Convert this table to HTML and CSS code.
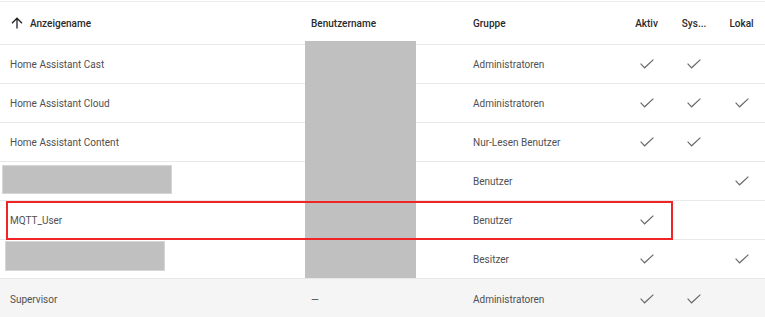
FILE: index.html
```html
<!DOCTYPE html>
<html lang="de">
<head>
<meta charset="utf-8">
<link rel="stylesheet" href="styles.css">
</head>
<body>
<div class="table">
  <div class="row head">
    <div class="cell name"><svg class="arrow" viewBox="0 0 12 12" width="12" height="12"><path d="M6 1.2V11.5M1 6.2L6 1.2L11 6.2" fill="none" stroke="#222" stroke-width="1.3"/></svg>Anzeigename</div>
    <div class="cell user">Benutzername</div>
    <div class="cell group">Gruppe</div>
    <div class="cell flag">Aktiv</div>
    <div class="cell flag">Sys...</div>
    <div class="cell flag">Lokal</div>
  </div>
  <div class="row">
    <div class="cell name">Home Assistant Cast</div>
    <div class="cell user"></div>
    <div class="cell group">Administratoren</div>
    <div class="cell flag"><svg class="check" viewBox="0 0 14 10" width="14" height="10"><path d="M0.6 4.6L4.6 8.8L13.4 0.6" fill="none" stroke="#6a6a6a" stroke-width="1.2"/></svg></div>
    <div class="cell flag"><svg class="check" viewBox="0 0 14 10" width="14" height="10"><path d="M0.6 4.6L4.6 8.8L13.4 0.6" fill="none" stroke="#6a6a6a" stroke-width="1.2"/></svg></div>
    <div class="cell flag"></div>
  </div>
  <div class="row">
    <div class="cell name">Home Assistant Cloud</div>
    <div class="cell user"></div>
    <div class="cell group">Administratoren</div>
    <div class="cell flag"><svg class="check" viewBox="0 0 14 10" width="14" height="10"><path d="M0.6 4.6L4.6 8.8L13.4 0.6" fill="none" stroke="#6a6a6a" stroke-width="1.2"/></svg></div>
    <div class="cell flag"><svg class="check" viewBox="0 0 14 10" width="14" height="10"><path d="M0.6 4.6L4.6 8.8L13.4 0.6" fill="none" stroke="#6a6a6a" stroke-width="1.2"/></svg></div>
    <div class="cell flag"><svg class="check" viewBox="0 0 14 10" width="14" height="10"><path d="M0.6 4.6L4.6 8.8L13.4 0.6" fill="none" stroke="#6a6a6a" stroke-width="1.2"/></svg></div>
  </div>
  <div class="row">
    <div class="cell name">Home Assistant Content</div>
    <div class="cell user"></div>
    <div class="cell group">Nur-Lesen Benutzer</div>
    <div class="cell flag"><svg class="check" viewBox="0 0 14 10" width="14" height="10"><path d="M0.6 4.6L4.6 8.8L13.4 0.6" fill="none" stroke="#6a6a6a" stroke-width="1.2"/></svg></div>
    <div class="cell flag"><svg class="check" viewBox="0 0 14 10" width="14" height="10"><path d="M0.6 4.6L4.6 8.8L13.4 0.6" fill="none" stroke="#6a6a6a" stroke-width="1.2"/></svg></div>
    <div class="cell flag"></div>
  </div>
  <div class="row">
    <div class="cell name"><span class="redact redact-a"></span></div>
    <div class="cell user"></div>
    <div class="cell group">Benutzer</div>
    <div class="cell flag"></div>
    <div class="cell flag"></div>
    <div class="cell flag"><svg class="check" viewBox="0 0 14 10" width="14" height="10"><path d="M0.6 4.6L4.6 8.8L13.4 0.6" fill="none" stroke="#6a6a6a" stroke-width="1.2"/></svg></div>
  </div>
  <div class="row">
    <div class="cell name">MQTT_User</div>
    <div class="cell user"></div>
    <div class="cell group">Benutzer</div>
    <div class="cell flag"><svg class="check" viewBox="0 0 14 10" width="14" height="10"><path d="M0.6 4.6L4.6 8.8L13.4 0.6" fill="none" stroke="#6a6a6a" stroke-width="1.2"/></svg></div>
    <div class="cell flag"></div>
    <div class="cell flag"></div>
  </div>
  <div class="row">
    <div class="cell name"><span class="redact redact-b"></span></div>
    <div class="cell user"></div>
    <div class="cell group">Besitzer</div>
    <div class="cell flag"><svg class="check" viewBox="0 0 14 10" width="14" height="10"><path d="M0.6 4.6L4.6 8.8L13.4 0.6" fill="none" stroke="#6a6a6a" stroke-width="1.2"/></svg></div>
    <div class="cell flag"></div>
    <div class="cell flag"><svg class="check" viewBox="0 0 14 10" width="14" height="10"><path d="M0.6 4.6L4.6 8.8L13.4 0.6" fill="none" stroke="#6a6a6a" stroke-width="1.2"/></svg></div>
  </div>
  <div class="row shaded">
    <div class="cell name">Supervisor</div>
    <div class="cell user">—</div>
    <div class="cell group">Administratoren</div>
    <div class="cell flag"><svg class="check" viewBox="0 0 14 10" width="14" height="10"><path d="M0.6 4.6L4.6 8.8L13.4 0.6" fill="none" stroke="#6a6a6a" stroke-width="1.2"/></svg></div>
    <div class="cell flag"><svg class="check" viewBox="0 0 14 10" width="14" height="10"><path d="M0.6 4.6L4.6 8.8L13.4 0.6" fill="none" stroke="#6a6a6a" stroke-width="1.2"/></svg></div>
    <div class="cell flag"></div>
  </div>
  <div class="user-redact"></div>
  <div class="highlight"></div>
</div>
</body>
</html>
```
FILE: styles.css
```css
html, body {
  margin: 0;
  padding: 0;
  background: #fff;
}
body {
  font-family: Roboto, "Liberation Sans", sans-serif;
  font-size: 10px;
  color: #505050;
  overflow: hidden;
}
.table {
  position: relative;
  width: 765px;
  height: 317px;
  border-top: 1px solid #ececec;
  margin-top: 1px;
}
.row {
  display: grid;
  grid-template-columns: 305px 111px 207px 47px 48px 47px;
  height: 38px;
  border-bottom: 1px solid #e8e8e8;
  align-items: center;
}
.row.head {
  height: 42px;
  color: #2a2a2a;
  font-weight: 500;
}
.row.shaded {
  background: #f5f5f5;
  border-bottom: none;
  height: 40px;
}
.cell {
  white-space: nowrap;
  display: flex;
  align-items: center;
}
.cell.name {
  padding-left: 10px;
}
.head .cell.name {
  padding-left: 11px;
}
.arrow {
  margin-right: 7px;
  margin-top: -1px;
}
.cell.user {
  padding-left: 6px;
}
.cell.group {
  padding-left: 57px;
}
.cell.flag {
  justify-content: center;
}
.check {
  display: block;
}
.redact {
  position: absolute;
  background: #c0c0c0;
  border: 1px solid #d6d6d6;
  box-sizing: border-box;
}
.redact-a {
  left: 2px;
  top: 163px;
  width: 170px;
  height: 29px;
}
.redact-b {
  left: 5px;
  top: 239px;
  width: 160px;
  height: 30px;
}
.user-redact {
  position: absolute;
  left: 305px;
  top: 39px;
  width: 111px;
  height: 237px;
  background: #c0c0c0;
}
.highlight {
  position: absolute;
  left: 6px;
  top: 199px;
  width: 667px;
  height: 39px;
  border: 2px solid #f02424;
  box-sizing: border-box;
}
```
